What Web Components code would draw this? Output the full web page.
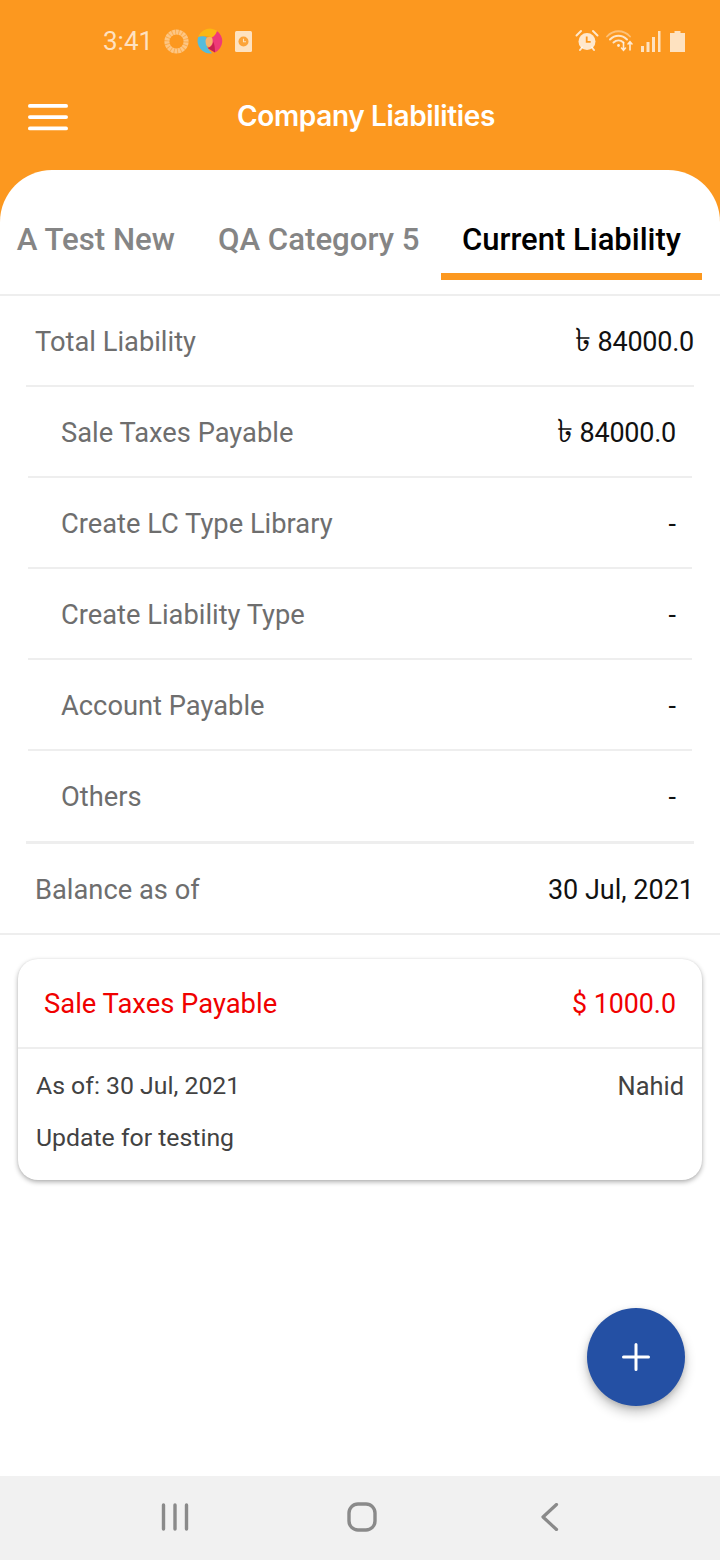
<!DOCTYPE html>
<html>
<head>
<meta charset="utf-8">
<title>Company Liabilities</title>
<style>
	html, body { margin: 0; padding: 0; }
	body { font-family: Roboto, "Noto Sans", sans-serif; }
</style>
</head>
<body>
<liability-screen>
	<status-bar slot="top" time="3:41"></status-bar>
	<app-header slot="top" title="Company Liabilities"></app-header>
	<tab-strip>
		<tab-item>A Test New</tab-item>
		<tab-item>QA Category 5</tab-item>
		<tab-item active>Current Liability</tab-item>
	</tab-strip>
	<ledger-row kind="total" label="Total Liability" value="৳ 84000.0"></ledger-row>
	<ledger-row label="Sale Taxes Payable" value="৳ 84000.0"></ledger-row>
	<ledger-row label="Create LC Type Library" value="-"></ledger-row>
	<ledger-row label="Create Liability Type" value="-"></ledger-row>
	<ledger-row label="Account Payable" value="-"></ledger-row>
	<ledger-row kind="last" label="Others" value="-"></ledger-row>
	<ledger-row kind="balance" label="Balance as of" value="30 Jul, 2021"></ledger-row>
	<note-card title="Sale Taxes Payable" amount="$ 1000.0" date="As of: 30 Jul, 2021" author="Nahid" note="Update for testing"></note-card>
	<fab-button slot="over"></fab-button>
	<nav-bar slot="bottom"></nav-bar>
</liability-screen>
<script>
const ORANGE = '#fc981f';

function define(name, html, extra) {
	const tpl = document.createElement('template');
	tpl.innerHTML = html;
	customElements.define(name, class extends HTMLElement {
		constructor() {
			super();
			this.attachShadow({ mode: 'open' }).appendChild(tpl.content.cloneNode(true));
		}
		connectedCallback() {
			this.shadowRoot.querySelectorAll('[data-attr]').forEach(el => {
				el.textContent = this.getAttribute(el.dataset.attr) || '';
			});
			if (extra) { extra.call(this); }
		}
	});
}

define('liability-screen', `
	<style>
		:host {
			display: flex;
			flex-direction: column;
			position: relative;
			width: 720px;
			height: 1560px;
			overflow: hidden;
			background: ${ORANGE};
		}
		.sheet {
			flex: 1;
			min-height: 0;
			display: flex;
			flex-direction: column;
			background: #fff;
			border-radius: 52px 52px 0 0;
		}
	</style>
	<slot name="top"></slot>
	<div class="sheet"><slot></slot></div>
	<slot name="bottom"></slot>
	<slot name="over"></slot>
`);

define('status-bar', `
	<style>
		:host {
			display: flex;
			align-items: center;
			justify-content: space-between;
			height: 82px;
			padding: 0 35px 0 103px;
			box-sizing: border-box;
			color: rgba(255, 255, 255, .72);
			font: 400 26px Roboto, sans-serif;
		}
		.group { display: flex; align-items: center; }
		svg { display: block; }
	</style>
	<div class="group">
		<span data-attr="time"></span>
		<svg style="margin-left:11px" width="25" height="25" viewBox="0 0 26 26" fill="none">
			<circle cx="13" cy="13" r="10" stroke="#fff" stroke-opacity=".45" stroke-width="5.2"/>
			<circle cx="13" cy="13" r="10" stroke="${ORANGE}" stroke-width="5.6" stroke-dasharray="1 2.49" stroke-opacity=".55"/>
		</svg>
		<svg style="margin-left:8px" width="26" height="26" viewBox="0 0 26 26">
			<circle cx="12.500" cy="14" r="5" fill="#f7b36a"/>
			<path d="M1.200 9A12.500 12.500 0 0 1 21 3.500C20 8 17 9.500 14 9.300C10 7.500 5 7.500 1.200 9Z" fill="#fbb713"/>
			<path d="M20 3A12.500 12.500 0 0 1 18 24.500L10.500 20C14.500 19 17 15 15 9.300C17 8.500 19 6 20 3Z" fill="#ef3a78"/>
			<path d="M10.500 20C13.500 19.500 16 17 16.200 13.500C17.800 17 18 21 18 24.500Z" fill="#c8204e"/>
			<path d="M1.200 9C4 7.600 8 8 10 9.500C7 12.500 8.500 19 15 25.300A12.500 12.500 0 0 1 1.200 9Z" fill="#55bcdc"/>
		</svg>
		<svg style="margin-left:12px" width="17" height="21" viewBox="0 0 17 21">
			<rect width="17" height="21" rx="1.500" fill="#fff" fill-opacity=".72"/>
			<circle cx="8.500" cy="10.500" r="5" fill="${ORANGE}" fill-opacity=".85"/>
			<path d="M8.500 7.800V10.800H11" fill="none" stroke="#fde2bd" stroke-width="1.100"/>
		</svg>
	</div>
	<div class="group">
		<svg width="24" height="24" viewBox="0 0 24 24">
			<g fill="none" stroke="#fff" stroke-opacity=".78" stroke-width="2" stroke-linecap="round">
				<path d="M1.500 6.500 6 2"/><path d="M22.500 6.500 18 2"/><path d="M5 21l2-2.500"/><path d="M19 21l-2-2.500"/>
			</g>
			<circle cx="12" cy="12.500" r="8.500" fill="#fff" fill-opacity=".78"/>
			<path d="M11.700 7.500v5.300h4" fill="none" stroke="${ORANGE}" stroke-width="1.800"/>
		</svg>
		<svg style="margin-left:7px" width="28" height="24" viewBox="0 0 28 24" fill="none" stroke="#fff" stroke-linecap="round">
			<path d="M1 7.500C7.500 .5 17.500 .5 24 7.500" stroke-opacity=".4" stroke-width="1.800"/>
			<path d="M4 10.500C9 5.500 16 5.500 21 10.500" stroke-opacity=".75" stroke-width="2"/>
			<path d="M7.500 13.500C10.500 10.800 14.500 10.800 17.500 13.500" stroke-opacity=".75" stroke-width="2"/>
			<circle cx="12.500" cy="16.500" r="1.400" fill="#fff" fill-opacity=".8" stroke="none"/>
			<path d="M17.500 14v7M15.500 19l2 2.200 2-2.200" stroke-opacity=".8" stroke-width="1.600"/>
			<path d="M24 21v-8M22 15l2-2.200 2 2.200" stroke-opacity=".8" stroke-width="1.600"/>
		</svg>
		<svg style="margin-left:7px" width="20" height="21" viewBox="0 0 20 21" fill="#fff" fill-opacity=".72">
			<rect x="0" y="15" width="3" height="6"/>
			<rect x="5.500" y="11" width="3" height="10"/>
			<rect x="11" y="6" width="3" height="15"/>
			<rect x="17" y="0" width="2.500" height="21"/>
		</svg>
		<svg style="margin-left:9px" width="15" height="21" viewBox="0 0 15 21" fill="#fff" fill-opacity=".72">
			<path d="M4.500 0h6v2H15v19H0V2h4.500Z"/>
		</svg>
	</div>
`);

define('app-header', `
	<style>
		:host {
			display: flex;
			align-items: center;
			height: 88px;
			padding: 0 0 18px 28px;
			box-sizing: border-box;
		}
		h1 {
			flex: 1;
			margin: -2px 0 0;
			padding-right: 56px;
			text-align: center;
			color: #fff;
			font: 600 28px/34px Inter, sans-serif;
			letter-spacing: -.35px;
		}
		.menu { display: block; }
	</style>
	<svg class="menu" width="40" height="28" viewBox="0 0 40 28" fill="#fff">
		<rect y="1" width="40" height="3.800" rx="1.900"/>
		<rect y="12.200" width="40" height="3.800" rx="1.900"/>
		<rect y="23.500" width="40" height="3.800" rx="1.900"/>
	</svg>
	<h1 data-attr="title"></h1>
`);

define('tab-strip', `
	<style>
		:host {
			display: flex;
			justify-content: flex-end;
			height: 126px;
			padding-right: 18px;
			box-sizing: border-box;
			border-bottom: 2px solid #eeeeee;
			overflow: hidden;
		}
	</style>
	<slot></slot>
`);

define('tab-item', `
	<style>
		:host {
			display: flex;
			flex: none;
			box-sizing: border-box;
			align-items: flex-start;
			height: 110px;
			padding: 50px 21.500px 0;
			color: #858585;
			font: 500 31.200px/40px Roboto, sans-serif;
			white-space: nowrap;
		}
		:host([active]) {
			padding: 50px 21px 0;
			color: #000;
			font-size: 31px;
			border-bottom: 7px solid ${ORANGE};
		}
	</style>
	<slot></slot>
`);

define('ledger-row', `
	<style>
		:host {
			display: flex;
			align-items: center;
			justify-content: space-between;
			height: 91px;
			margin: 0 28px;
			padding: 2px 16px 0 33px;
			box-sizing: border-box;
			border-bottom: 2px solid #eeeeee;
			font: 400 27px/36px Roboto, sans-serif;
		}
		.label { color: #6e6e6e; font-size: 27.300px; }
		.value { color: #111; }
		.value.money { letter-spacing: -.25px; }
		.taka { font-size: 32px; line-height: 0; }
		:host([kind="total"]) {
			margin: 0 26px;
			padding: 2px 0 0 9px;
		}
		:host([kind="last"]) {
			height: 93px;
			margin: 0 26px;
			padding: 2px 18px 0 35px;
			border-bottom-width: 3px;
		}
		:host([kind="balance"]) {
			margin: 0;
			padding: 2px 26px 0 35px;
		}
	</style>
	<span class="label" data-attr="label"></span>
	<span class="value" data-attr="value"></span>
`, function () {
	const value = this.shadowRoot.querySelector('.value');
	const text = value.textContent;
	if (text.startsWith('৳')) {
		value.classList.add('money');
		value.innerHTML = `<span class="taka">৳</span>${text.slice(1)}`;
	}
});

define('note-card', `
	<style>
		:host {
			display: block;
			margin: 24px 18px 0;
			height: 221px;
			background: #fff;
			border-radius: 20px;
			box-shadow: 0 2px 5px rgba(0, 0, 0, .32), 0 0 2px rgba(0, 0, 0, .06);
			font: 400 24.800px Roboto, sans-serif;
			color: #424242;
		}
		.head {
			display: flex;
			align-items: center;
			justify-content: space-between;
			height: 90px;
			padding: 2px 26px 0;
			box-sizing: border-box;
			border-bottom: 2px solid #eeeeee;
			color: #f00000;
			font-size: 27.400px;
		}
		.amount { font-size: 26.800px; }
		.body { padding: 11px 18px 0 18px; }
		.line {
			display: flex;
			justify-content: space-between;
			line-height: 52px;
		}
		.author { font-size: 25.400px; }
	</style>
	<div class="head"><span data-attr="title"></span><span class="amount" data-attr="amount"></span></div>
	<div class="body">
		<div class="line"><span data-attr="date"></span><span class="author" data-attr="author"></span></div>
		<div class="line"><span data-attr="note"></span></div>
	</div>
`);

define('fab-button', `
	<style>
		:host {
			display: flex;
			align-items: center;
			justify-content: center;
			position: absolute;
			left: 587px;
			top: 1308px;
			width: 98px;
			height: 98px;
			border-radius: 50%;
			background: #2450a4;
			box-shadow: 0 6px 12px rgba(0, 0, 0, .24), 0 2px 5px rgba(0, 0, 0, .12);
		}
	</style>
	<svg width="30" height="30" viewBox="0 0 30 30" stroke="#fff" stroke-width="3" stroke-linecap="round">
		<path d="M15 2.500V27.500M2.500 15H27.500"/>
	</svg>
`);

define('nav-bar', `
	<style>
		:host {
			display: flex;
			align-items: center;
			height: 84px;
			padding: 0 0 2px 161px;
			box-sizing: border-box;
			background: #f1f1f1;
		}
		svg { display: block; flex: none; }
	</style>
	<svg width="28" height="28" viewBox="0 0 28 28" stroke="#8a8a8a" stroke-width="3.400" stroke-linecap="round">
		<path d="M2.500 2V26M14 2V26M25.500 2V26"/>
	</svg>
	<svg style="margin-left:158px" width="30" height="30" viewBox="0 0 30 30" fill="none" stroke="#8a8a8a" stroke-width="3.400">
		<rect x="2" y="2" width="26" height="26" rx="9"/>
	</svg>
	<svg style="margin-left:164px" width="18" height="28" viewBox="0 0 18 28" fill="none" stroke="#8a8a8a" stroke-width="3.200" stroke-linecap="round" stroke-linejoin="round">
		<path d="M15.500 1.500 2 14 15.500 26.500"/>
	</svg>
`);
</script>
</body>
</html>
